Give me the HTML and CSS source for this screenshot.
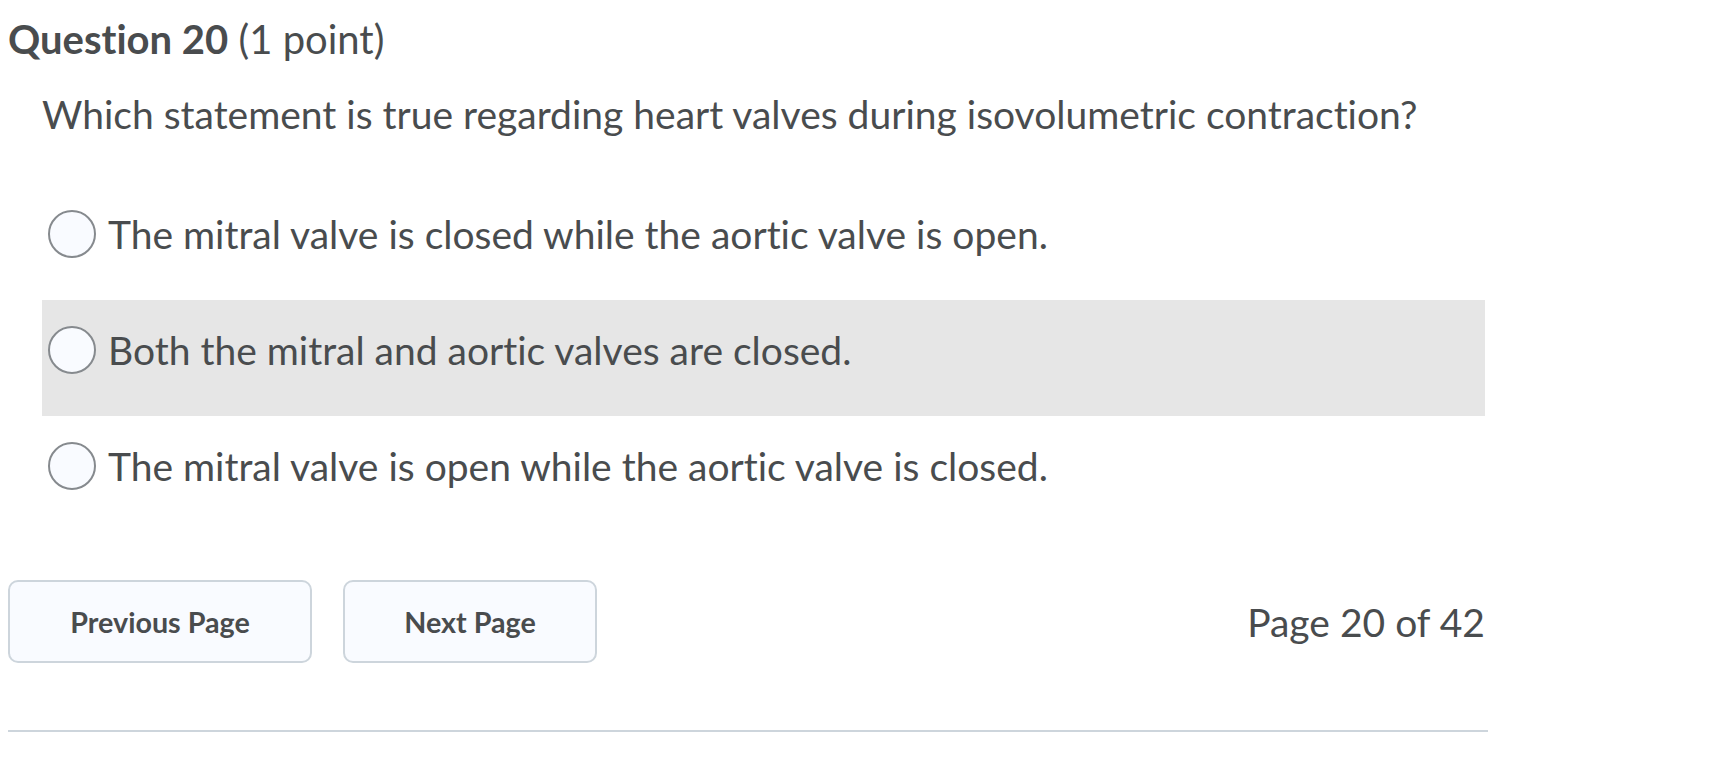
FILE: index.html
```html
<!DOCTYPE html>
<html lang="en">
<head>
<meta charset="utf-8">
<title>Question 20</title>
<link rel="stylesheet" href="styles.css">
</head>
<body>
<main class="page">
  <h2 class="q-title"><strong>Question 20</strong> (1 point)</h2>
  <div class="q-body">
    <p class="q-text">Which statement is true regarding heart valves during isovolumetric contraction?</p>
    <ul class="options">
      <li class="option"><span class="radio"></span><span class="opt-text">The mitral valve is closed while the aortic valve is open.</span></li>
      <li class="option option-hover"><span class="radio"></span><span class="opt-text">Both the mitral and aortic valves are closed.</span></li>
      <li class="option"><span class="radio"></span><span class="opt-text">The mitral valve is open while the aortic valve is closed.</span></li>
    </ul>
  </div>
  <div class="pager">
    <button class="btn btn-prev">Previous Page</button>
    <button class="btn btn-next">Next Page</button>
    <span class="page-count">Page 20 of 42</span>
  </div>
  <hr class="divider">
</main>
</body>
</html>
```
FILE: styles.css
```css
html, body {
  margin: 0;
  padding: 0;
  background: #ffffff;
}
body {
  font-family: Lato, "Noto Sans", sans-serif;
  color: #494c4e;
  font-variant-ligatures: none;
}
.page {
  width: 1480px;
  padding: 0 0 0 8px;
}
.q-title {
  margin: 0;
  padding-top: 14px;
  font-size: 40px;
  font-weight: 400;
  line-height: 50px;
}
.q-title strong {
  font-weight: 700;
}
.q-body {
  margin-left: 34px;
  width: 1443px;
}
.q-text {
  margin: 0;
  padding-top: 26px;
  font-size: 39px;
  line-height: 48px;
}
.options {
  list-style: none;
  margin: 46px 0 0 0;
  padding: 0;
}
.option {
  display: flex;
  align-items: flex-start;
  height: 116px;
  box-sizing: border-box;
  padding: 26px 0 0 6px;
}
.option-hover {
  background: #e6e6e6;
}
.radio {
  flex: none;
  width: 48px;
  height: 48px;
  box-sizing: border-box;
  border: 2px solid #868a8e;
  border-radius: 50%;
  background: #f9fbff;
}
.opt-text {
  margin-left: 12px;
  font-size: 39px;
  line-height: 48px;
}
.pager {
  display: flex;
  align-items: center;
  margin-top: 48px;
  width: 1477px;
}
.btn {
  height: 83px;
  box-sizing: border-box;
  border: 2px solid #cdd5dc;
  border-radius: 10px;
  background: #f9fbff;
  color: #494c4e;
  font-family: Lato, "Noto Sans", sans-serif;
  font-variant-ligatures: none;
  font-weight: 700;
  font-size: 28.7px;
  padding: 0;
}
.btn-prev {
  width: 304px;
}
.btn-next {
  width: 254px;
  margin-left: 31px;
}
.page-count {
  margin-left: auto;
  font-size: 39px;
}
.divider {
  margin: 67px 0 0 0;
  width: 1480px;
  height: 2px;
  border: 0;
  background: #cdd5dc;
}
```
